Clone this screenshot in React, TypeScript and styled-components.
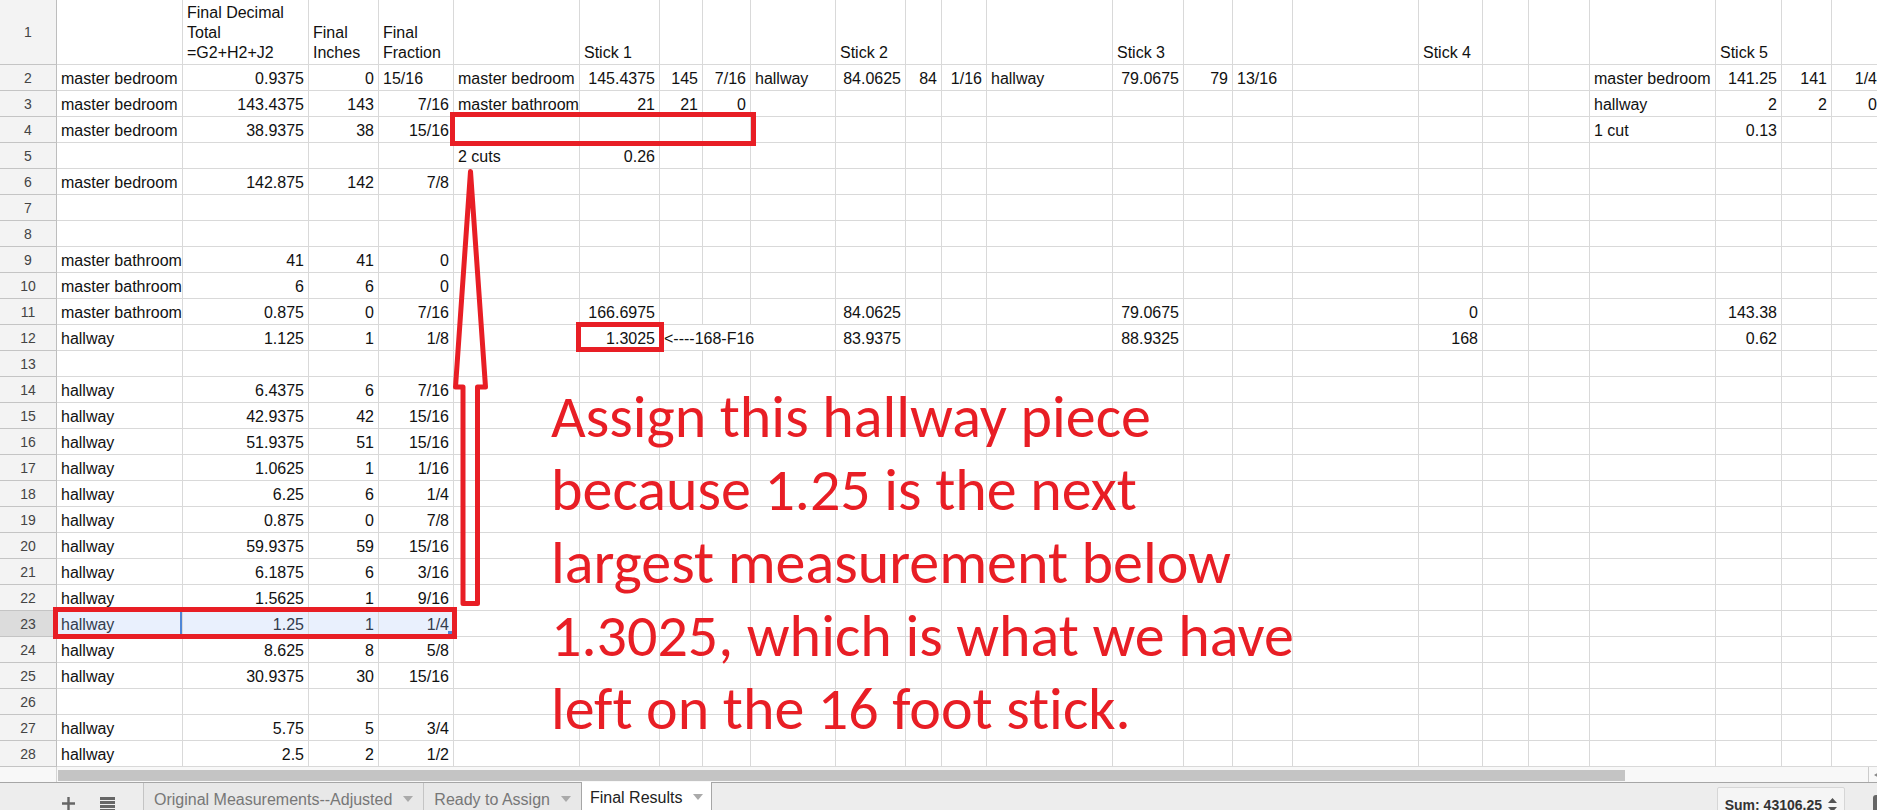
import React from 'react';
import styled, { createGlobalStyle } from 'styled-components';

const RED = '#e81e25';
const SANS = '"Liberation Sans", Arial, Helvetica, sans-serif';

const GlobalStyle = createGlobalStyle`
  *, *::before, *::after { box-sizing: border-box; }
  body { margin: 0; background: #fff; font-family: ${SANS}; overflow: hidden; }
`;

const Page = styled.main`
  display: flex;
  flex-direction: column;
  height: 100vh;
  overflow: hidden;
`;

const SheetArea = styled.section`
  position: relative;
  flex: none;
  overflow: hidden;
`;

const Grid = styled.table`
  table-layout: fixed;
  border-collapse: separate;
  border-spacing: 0;
  width: max-content;
  font-size: 16px;
  line-height: 20px;
  color: #111;
`;

const Column = styled.col<{ $width: number }>`
  width: ${(p) => p.$width}px;
`;

const Row = styled.tr<{ $tall?: boolean }>`
  height: ${(p) => (p.$tall ? 65 : 26)}px;
`;

const RowNumber = styled.th<{ $selected?: boolean }>`
  padding: 0;
  border-right: 1px solid #bdbdbd;
  border-bottom: 1px solid #c4c4c4;
  background: ${(p) => (p.$selected ? '#dcdcdc' : '#f3f3f3')};
  color: #444;
  font-size: 14px;
  font-weight: 400;
  text-align: center;
  vertical-align: middle;
`;

const Cell = styled.td<{ $right?: boolean; $selected?: boolean; $active?: boolean; $wrap?: boolean }>`
  padding: 0 4px 1px;
  border-right: 1px solid #d9d9d9;
  border-bottom: 1px solid #d9d9d9;
  background: ${(p) => (p.$selected ? '#e9f0fd' : '#fff')};
  box-shadow: ${(p) => (p.$active ? 'inset -2px 0 #4f86d6' : 'none')};
  color: ${(p) => (p.$selected ? '#333c4d' : '#111')};
  text-align: ${(p) => (p.$right ? 'right' : 'left')};
  vertical-align: bottom;
  white-space: ${(p) => (p.$wrap ? 'pre-line' : 'nowrap')};
  overflow: hidden;
`;

const Highlight = styled.div<{ $x: number; $y: number; $w: number; $h: number }>`
  position: absolute;
  left: ${(p) => p.$x}px;
  top: ${(p) => p.$y}px;
  width: ${(p) => p.$w}px;
  height: ${(p) => p.$h}px;
  border: 5px solid ${RED};
`;

const FillHandle = styled.span`
  position: absolute;
  left: 448px;
  top: 631px;
  width: 4px;
  height: 4px;
  background: #4f86d6;
`;

const Arrow = styled.svg`
  position: absolute;
  left: 450px;
  top: 166px;
`;

const Note = styled.p`
  position: absolute;
  left: 551px;
  top: 380px;
  margin: 0;
  color: ${RED};
  font-family: Calibri, Carlito, Lato, sans-serif;
  font-size: 60px;
  font-variant-ligatures: none;
  line-height: 73px;
  white-space: pre;
`;

const ScrollRow = styled.div`
  display: flex;
  flex: none;
  height: 15px;
  background: #f8f8f8;
`;

const ScrollCorner = styled.div`
  width: 57px;
  border-right: 1px solid #d4d4d4;
`;

const ScrollTrack = styled.div`
  flex: 1;
  padding: 3px 0 1px 1px;
`;

const ScrollThumb = styled.div`
  width: 86.6%;
  height: 11px;
  background: #c4c4c4;
`;

const ScrollButton = styled.button`
  display: flex;
  align-items: center;
  justify-content: flex-start;
  width: 9px;
  padding: 0 0 0 5px;
  border: 0;
  border-left: 1px solid #ccc;
  background: transparent;
  overflow: hidden;
`;

const Footer = styled.footer`
  display: flex;
  flex: none;
  height: 42px;
  border-top: 1px solid #a6a6a6;
  background: #ededed;
`;

const Tools = styled.div`
  display: flex;
  align-items: flex-start;
  gap: 25px;
  width: 143px;
  padding: 14px 0 0 62px;
`;

const IconButton = styled.button`
  display: block;
  padding: 0;
  border: 0;
  background: transparent;
  line-height: 0;
`;

const Tab = styled.button<{ $active?: boolean }>`
  display: flex;
  align-items: flex-start;
  gap: 11px;
  height: 36px;
  margin-top: ${(p) => (p.$active ? '-1px' : '0')};
  padding: ${(p) => (p.$active ? '6px 8px 0' : '7px 10px 0')};
  border: 0;
  border-left: 1px solid ${(p) => (p.$active ? '#a6a6a6' : '#c4c4c4')};
  border-right: ${(p) => (p.$active ? '1px solid #a6a6a6' : '0')};
  background: ${(p) => (p.$active ? '#fff' : '#e8e8e8')};
  color: ${(p) => (p.$active ? '#222' : '#777')};
  font-family: ${SANS};
  font-size: 16px;
  line-height: 20px;
  white-space: nowrap;
`;

const Caret = styled.span`
  margin-top: 6px;
  border: 5px solid transparent;
  border-top: 6px solid #aaa;
  border-bottom: 0;
`;

const Spacer = styled.div`
  flex: 1;
`;

const SumButton = styled.button`
  display: flex;
  align-items: center;
  gap: 6px;
  height: 36px;
  margin: 4px 28px 0 0;
  padding: 0 7px;
  border: 1px solid #d6d6d6;
  border-radius: 2px;
  background: #f5f5f5;
  color: #333;
  font-family: ${SANS};
  font-size: 14px;
  font-weight: 700;
  white-space: nowrap;
`;

const ExploreButton = styled.button`
  width: 4px;
  height: 24px;
  margin-top: 12px;
  padding: 0;
  border: 0;
  border-radius: 3px 0 0 0;
  background: #666;
`;

const widths = [57, 126, 126, 70, 75, 126, 80, 43, 48, 85, 70, 36, 45, 126, 71, 49, 60, 126, 64, 46, 61, 126, 66, 50, 50];
const LETTERS = 'BCDEFGHIJKLMNOPQRSTUVWXY'.split('');

type RowData = Record<string, string>;

const piece = (room: string, total: string, inches: string, fraction: string): RowData => ({
  B: room,
  C: total,
  D: inches,
  E: fraction,
});

// A leading apostrophe marks a value that is kept as plain text, as in a spreadsheet.
const rows: RowData[] = [
  {
    C: 'Final Decimal\nTotal\n=G2+H2+J2',
    D: 'Final\nInches',
    E: 'Final\nFraction',
    G: 'Stick 1',
    K: 'Stick 2',
    O: 'Stick 3',
    S: 'Stick 4',
    W: 'Stick 5',
  },
  {
    ...piece('master bedroom', '0.9375', '0', "'15/16"),
    F: 'master bedroom', G: '145.4375', H: '145', I: '7/16',
    J: 'hallway', K: '84.0625', L: '84', M: '1/16',
    N: 'hallway', O: '79.0675', P: '79', Q: "'13/16",
    V: 'master bedroom', W: '141.25', X: '141', Y: '1/4',
  },
  {
    ...piece('master bedroom', '143.4375', '143', '7/16'),
    F: 'master bathroom', G: '21', H: '21', I: '0',
    V: 'hallway', W: '2', X: '2', Y: '0',
  },
  { ...piece('master bedroom', '38.9375', '38', '15/16'), V: '1 cut', W: '0.13' },
  { F: '2 cuts', G: '0.26' },
  piece('master bedroom', '142.875', '142', '7/8'),
  {},
  {},
  piece('master bathroom', '41', '41', '0'),
  piece('master bathroom', '6', '6', '0'),
  {
    ...piece('master bathroom', '0.875', '0', '7/16'),
    G: '166.6975', K: '84.0625', O: '79.0675', S: '0', W: '143.38',
  },
  {
    ...piece('hallway', '1.125', '1', '1/8'),
    G: '1.3025', H: '<----168-F16', K: '83.9375', O: '88.9325', S: '168', W: '0.62',
  },
  {},
  piece('hallway', '6.4375', '6', '7/16'),
  piece('hallway', '42.9375', '42', '15/16'),
  piece('hallway', '51.9375', '51', '15/16'),
  piece('hallway', '1.0625', '1', '1/16'),
  piece('hallway', '6.25', '6', '1/4'),
  piece('hallway', '0.875', '0', '7/8'),
  piece('hallway', '59.9375', '59', '15/16'),
  piece('hallway', '6.1875', '6', '3/16'),
  piece('hallway', '1.5625', '1', '9/16'),
  piece('hallway', '1.25', '1', '1/4'),
  piece('hallway', '8.625', '8', '5/8'),
  piece('hallway', '30.9375', '30', '15/16'),
  {},
  piece('hallway', '5.75', '5', '3/4'),
  piece('hallway', '2.5', '2', '1/2'),
];

const SELECTED_ROW = 23;

const isNumber = (value: string) => /^[\d./]+$/.test(value);

function SheetRow({ data, number }: { data: RowData; number: number }) {
  const selected = number === SELECTED_ROW;
  const cells: React.ReactNode[] = [];
  for (let i = 0; i < LETTERS.length; i++) {
    const letter = LETTERS[i];
    const value = data[letter] ?? '';
    const span = value.startsWith('<') ? 3 : 1;
    cells.push(
      <Cell
        key={letter}
        colSpan={span}
        $right={isNumber(value)}
        $selected={selected && i < 4}
        $active={selected && i === 0}
        $wrap={number === 1}
      >
        {value.replace(/^'/, '')}
      </Cell>,
    );
    i += span - 1;
  }
  return (
    <Row $tall={number === 1}>
      <RowNumber scope="row" $selected={selected}>{number}</RowNumber>
      {cells}
    </Row>
  );
}

export default function App() {
  return (
    <Page>
      <GlobalStyle />
      <SheetArea>
        <Grid style={{ width: widths.reduce((a, b) => a + b, 0) }}>
          <colgroup>
            {widths.map((w, i) => <Column key={i} $width={w} />)}
          </colgroup>
          <tbody>
            {rows.map((data, i) => <SheetRow key={i} data={data} number={i + 1} />)}
          </tbody>
        </Grid>
        <FillHandle />
        <Highlight $x={450} $y={112} $w={306} $h={34} />
        <Highlight $x={576} $y={322} $w={88} $h={30} />
        <Highlight $x={53} $y={607} $w={404} $h={32} />
        <Arrow width="40" height="444" viewBox="0 0 40 444" aria-hidden="true">
          <path
            d="M20.5 5.5 L35.5 221 H27.5 V437.5 H13 V221 H5.5 Z"
            fill="none"
            stroke={RED}
            strokeWidth="5"
            strokeLinejoin="round"
          />
        </Arrow>
        <Note>
          {'Assign this hallway piece\nbecause 1.25 is the next\nlargest measurement below\n1.3025, which is what we have\nleft on the 16 foot stick.'}
        </Note>
      </SheetArea>
      <ScrollRow>
        <ScrollCorner />
        <ScrollTrack><ScrollThumb /></ScrollTrack>
        <ScrollButton aria-label="Scroll left">
          <svg width="5" height="6" viewBox="0 0 5 6"><path d="M0 3 L5 0 V6 Z" fill="#888" /></svg>
        </ScrollButton>
      </ScrollRow>
      <Footer>
        <Tools>
          <IconButton aria-label="Add sheet">
            <svg width="13" height="13" viewBox="0 0 13 13"><path d="M6.5 0 V13 M0 6.5 H13" stroke="#666" strokeWidth="2.4" /></svg>
          </IconButton>
          <IconButton aria-label="All sheets">
            <svg width="15" height="15" viewBox="0 0 15 15"><path d="M0 1.5 H15 M0 5.5 H15 M0 9.5 H15 M0 13.5 H15" stroke="#666" strokeWidth="2.8" /></svg>
          </IconButton>
        </Tools>
        <Tab>Original Measurements--Adjusted<Caret /></Tab>
        <Tab>Ready to Assign<Caret /></Tab>
        <Tab $active>Final Results<Caret /></Tab>
        <Spacer />
        <SumButton>
          Sum: 43106.25
          <svg width="9" height="14" viewBox="0 0 9 14"><path d="M0 5 L4.5 0 L9 5 Z M0 9 L4.5 14 L9 9 Z" fill="#555" /></svg>
        </SumButton>
        <ExploreButton aria-label="Explore" />
      </Footer>
    </Page>
  );
}
